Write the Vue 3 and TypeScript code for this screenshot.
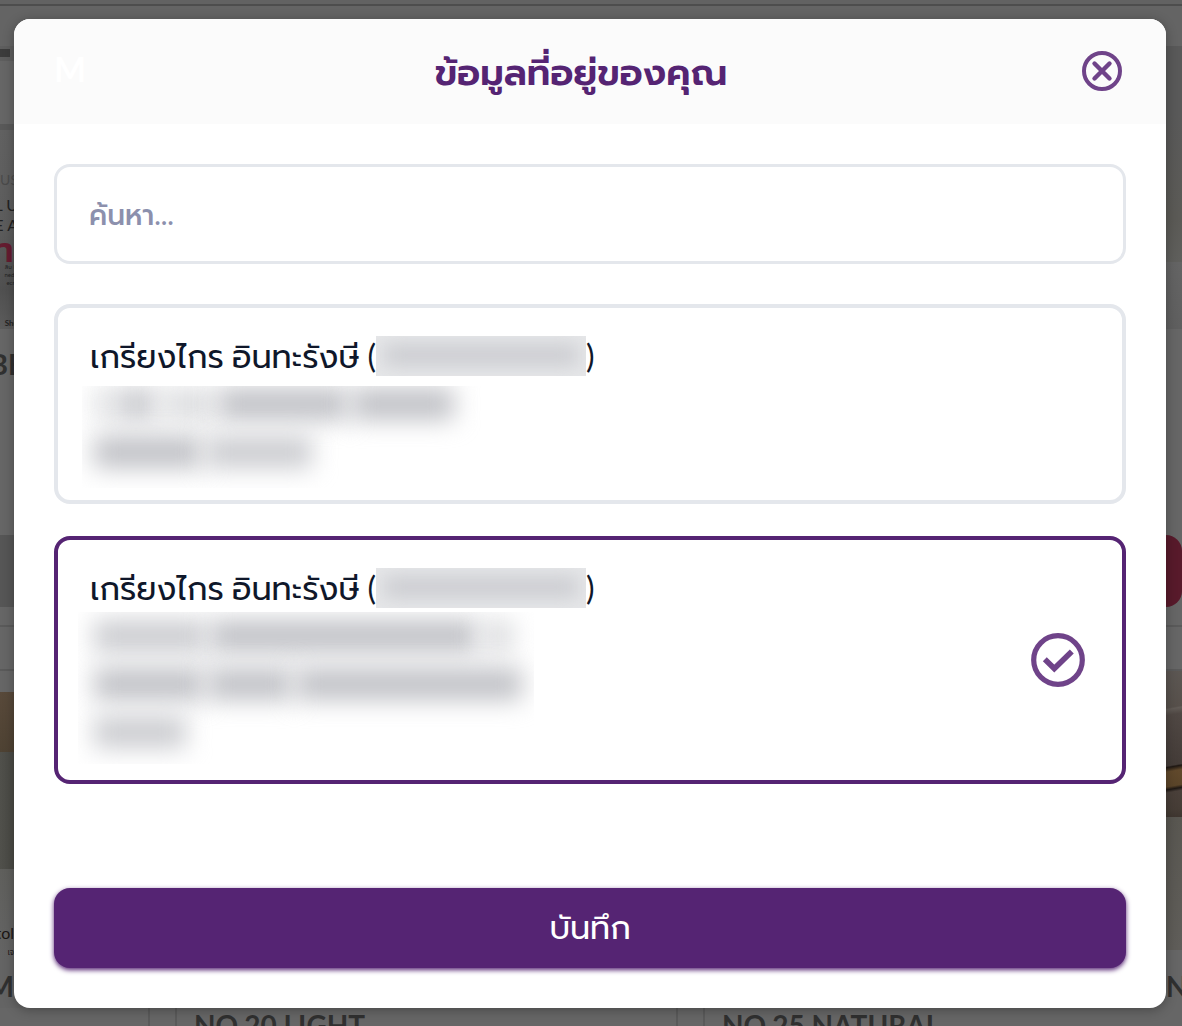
<script setup lang="ts">
import { ref } from 'vue'

interface Smudge {
  width: number
  tone: string
}

interface Address {
  id: string
  name: string
  phone: string
  box: string
  rows: Smudge[][]
}

const search = ref('')
const selected = ref('office')

const addresses: Address[] = [
  {
    id: 'home',
    name: 'เกรียงไกร อินทะรังษี',
    phone: 'first',
    box: 'short',
    rows: [
      [
        { width: 16, tone: 'pale' },
        { width: 44, tone: 'mid' },
        { width: 52, tone: 'pale' },
        { width: 130, tone: 'dark' },
        { width: 102, tone: 'dark' },
      ],
      [
        { width: 108, tone: 'dark' },
        { width: 106, tone: 'mid' },
      ],
    ],
  },
  {
    id: 'office',
    name: 'เกรียงไกร อินทะรังษี',
    phone: 'second',
    box: 'long',
    rows: [
      [
        { width: 112, tone: 'mid' },
        { width: 268, tone: 'dark' },
        { width: 32, tone: 'pale' },
      ],
      [
        { width: 110, tone: 'dark' },
        { width: 84, tone: 'dark' },
        { width: 226, tone: 'dark' },
      ],
      [{ width: 92, tone: 'mid' }],
    ],
  },
]
</script>

<template>
  <div class="screen">
    <div class="shop" aria-hidden="true">
      <div class="topbar"></div>
      <div class="aisle">
        <div class="rail left">
          <div class="strip"><span class="stub"></span></div>
          <div class="poster">
            <p class="faint">US</p>
            <p class="thin">L U</p>
            <p class="thin">E A</p>
            <p class="red">า</p>
            <p class="tiny">สิบ N<br />ned t<br />ecru</p>
            <p class="caption">Shu</p>
          </div>
          <p class="product">BE</p>
          <div class="slab"></div>
          <div class="divider"></div>
          <div class="tan"></div>
          <div class="stone"></div>
          <div class="lower">
            <p class="tol">tol</p>
            <p class="sub">เจ</p>
            <p class="product">M</p>
          </div>
        </div>
        <div class="rail right">
          <div class="banner"></div>
          <div class="banner-foot"></div>
          <div class="red-button"></div>
          <div class="divider"></div>
          <div class="jar"></div>
          <div class="shelf"></div>
          <p class="product">N</p>
        </div>
      </div>
      <div class="products">
        <div class="product-card first"></div>
        <div class="product-card"><p class="product">NO.20 LIGHT</p></div>
        <div class="product-card"><p class="product">NO.25 NATURAL</p></div>
      </div>
    </div>

    <div class="overlay">
      <section class="dialog" role="dialog" aria-modal="true" aria-labelledby="dialog-title">
        <header class="dialog-head">
          <span class="monogram">M</span>
          <h1 id="dialog-title">ข้อมูลที่อยู่ของคุณ</h1>
          <button class="close" type="button" aria-label="ปิด">
            <svg viewBox="0 0 40 40" width="40" height="40" fill="none" stroke="currentColor">
              <circle cx="20" cy="20" r="18" stroke-width="4" />
              <path d="M12.500 12.500L27.500 27.500M27.500 12.500L12.500 27.500" stroke-width="4.400" stroke-linecap="round" />
            </svg>
          </button>
        </header>

        <form class="dialog-body" @submit.prevent>
          <input v-model="search" class="search" type="text" placeholder="ค้นหา..." aria-label="ค้นหา" />

          <div class="addresses">
            <label
              v-for="address in addresses"
              :key="address.id"
              class="address"
              :class="{ active: selected === address.id }"
            >
              <input v-model="selected" class="radio" type="radio" name="address" :value="address.id" />
              <span class="details">
                <span class="name">
                  <span class="who">{{ address.name }} (</span>
                  <span class="phone" :class="address.phone"><span></span></span>
                  <span>)</span>
                </span>
                <span class="hidden-text" :class="address.box">
                  <span v-for="(row, r) in address.rows" :key="r" class="smudge-row">
                    <span
                      v-for="(s, i) in row"
                      :key="i"
                      class="smudge"
                      :class="s.tone"
                      :style="{ width: s.width + 'px' }"
                    ></span>
                  </span>
                </span>
              </span>
              <svg
                v-if="selected === address.id"
                class="check"
                viewBox="0 0 54 54"
                width="54"
                height="54"
                fill="none"
                stroke="currentColor"
              >
                <circle cx="27" cy="27" r="24.300" stroke-width="5.200" />
                <path d="M13.800 26.300L23.300 35.500L40.800 18.500" stroke-width="5.600" />
              </svg>
            </label>
          </div>

          <button class="save" type="submit">บันทึก</button>
        </form>
      </section>
    </div>
  </div>
</template>

<style>
body {
  background: #666;
}
</style>

<style scoped>
.screen {
  position: relative;
  min-height: 100vh;
  overflow: hidden;
  font-family: Lato, 'Prompt', 'Noto Sans Thai', 'Noto Sans', sans-serif;
  color: #0f172a;
}

.screen *,
.screen {
  box-sizing: border-box;
}

p,
h1 {
  margin: 0;
}

.shop {
  position: absolute;
  inset: 0;
  overflow: hidden;
  display: flex;
  flex-direction: column;
  background: #666;
}

.topbar {
  flex: none;
  height: 46px;
  background: linear-gradient(#626262 4px, #4d4d4d 4px, #4d4d4d 6px, #646464 6px);
}

.aisle {
  flex: none;
  height: 962px;
  display: flex;
  justify-content: space-between;
}

.rail {
  display: flex;
  flex-direction: column;
}

.left {
  width: 24px;
}

.right {
  width: 16px;
}

.strip {
  height: 15px;
  padding-top: 3px;
  background: #5e5e5e;
}

.stub {
  display: block;
  width: 10px;
  height: 8px;
  background: #3c3c3c;
}

.poster {
  height: 205px;
  margin-top: 63px;
  padding: 38px 6px 0 0;
  border-top: 6px solid #595959;
  background: linear-gradient(#616161, #5c5c5c 50%, #505050 80%, #5c5c5c);
  direction: rtl;
  white-space: nowrap;
  font-family: Lato, 'Noto Sans Thai', sans-serif;
  color: #222;
}

.faint {
  height: 27px;
  font-size: 14px;
  line-height: 24px;
  color: #4b4b4b;
}

.thin {
  font-size: 16px;
  line-height: 20px;
}

.red {
  padding-right: 4px;
  font-size: 34px;
  font-weight: 700;
  line-height: 28px;
  color: #651c30;
}

.tiny {
  font-size: 6px;
  line-height: 8px;
}

.caption {
  margin-top: 28px;
  font-size: 8px;
  font-weight: 700;
  line-height: 16px;
}

.product {
  direction: rtl;
  font-family: Lato, sans-serif;
  font-size: 28px;
  font-weight: 700;
  line-height: 34px;
  color: #303030;
  white-space: nowrap;
}

.left > .product {
  margin-top: 18px;
}

.slab {
  height: 72px;
  margin-top: 154px;
  background: #565656;
}

.divider {
  height: 46px;
  margin-top: 18px;
  border-top: 2px solid #5a5a5a;
  border-bottom: 2px solid #5a5a5a;
}

.tan {
  height: 60px;
  margin-top: 21px;
  background: linear-gradient(#58493a, #4e4233);
}

.stone {
  height: 117px;
  background: linear-gradient(to right, #50504b, #454540);
}

.lower {
  height: 139px;
  padding: 50px 10px 0 0;
  background: linear-gradient(#5f5f5c, #646464 90px);
  direction: rtl;
  font-family: Lato, 'Noto Sans Thai', sans-serif;
}

.tol {
  font-size: 16px;
  line-height: 28px;
  color: #1c1614;
}

.sub {
  height: 22px;
  font-size: 8px;
  line-height: 10px;
  color: #1c1614;
}

.banner {
  height: 216px;
  background: linear-gradient(#595959 30%, #5b5a56 80%, #5f5f5c);
}

.banner-foot {
  height: 67px;
  background: linear-gradient(#646464, #5f5f5f);
}

.red-button {
  height: 72px;
  margin-top: 206px;
  border-radius: 0 16px 16px 0;
  background: #581a2b;
}

.jar {
  height: 146px;
  background: linear-gradient(
    170deg,
    #5c5753 0,
    #57504b 25%,
    #625c57 26%,
    #504844 30%,
    #443c38 64%,
    #1f1813 65%,
    #61492c 68%,
    #5b4529 78%,
    #1e1814 80%,
    #4a403a 82%,
    #463d36 94%,
    #3e352f
  );
}

.shelf {
  height: 133px;
  background: linear-gradient(#595751, #5f5d59);
}

.right > .product {
  margin-top: 19px;
  direction: ltr;
}

.products {
  flex: none;
  display: grid;
  grid-template-columns: 150px 1fr 1fr;
  column-gap: 25px;
  margin-right: -24px;
}

.product-card {
  height: 80px;
  padding-left: 17px;
  border: solid #5a5a5a;
  border-width: 0 2px;
}

.product-card.first {
  border-left: 0;
}

.product-card .product {
  direction: ltr;
}

.overlay {
  position: relative;
  min-height: 100vh;
  padding: 19px 16px 18px 14px;
}

.dialog {
  overflow: hidden;
  border-radius: 16px;
  background: #fff;
  box-shadow: 0 2px 12px rgba(0, 0, 0, 0.3);
}

.dialog-head {
  display: grid;
  grid-template-columns: 46px 1fr 60px;
  align-items: center;
  height: 105px;
  padding: 0 44px 2px 40px;
  background: #fbfbfb;
}

.monogram {
  padding-bottom: 4px;
  font-family: Lato, sans-serif;
  font-size: 34px;
  font-weight: 700;
  line-height: 40px;
  color: #fff;
}

h1 {
  text-align: center;
  font-size: 37px;
  font-weight: 600;
  line-height: 60px;
  color: #552473;
}

.close {
  justify-self: end;
  width: 40px;
  height: 40px;
  padding: 0;
  border: 0;
  background: none;
  color: #6f4389;
}

.close svg {
  display: block;
}

.dialog-body {
  padding: 40px;
}

.search {
  display: block;
  width: 100%;
  height: 100px;
  padding: 0 32px;
  border: 3px solid #e4e7ec;
  border-radius: 16px;
  outline: 0;
  background: #fff;
  font: inherit;
  font-size: 28px;
  font-weight: 500;
}

.search::placeholder {
  color: #8c90ad;
  opacity: 1;
}

.addresses {
  display: flex;
  flex-direction: column;
  gap: 32px;
  margin: 40px 0 104px;
}

.address {
  display: flex;
  align-items: center;
  justify-content: space-between;
  padding: 24px 37px 24px 32px;
  border: 4px solid #e4e7ec;
  border-radius: 16px;
}

.address.active {
  border-color: #552473;
}

.radio {
  position: absolute;
  opacity: 0;
}

.details {
  display: block;
}

.name {
  display: flex;
  align-items: center;
  height: 48px;
  font-size: 32px;
  line-height: 48px;
  white-space: nowrap;
}

.phone {
  overflow: hidden;
  width: 210px;
  height: 40px;
  background: #e6e7e9;
}

.phone span {
  display: block;
  height: 18px;
  margin: 10px 8px;
  background: #c6c7cc;
  filter: blur(10px);
}

.hidden-text {
  display: block;
  width: 456px;
  margin-left: -12px;
}

.short {
  height: 96px;
  clip-path: inset(6px 0 -12px 4px);
}

.long {
  height: 144px;
  clip-path: inset(0 0 -8px 0);
}

.smudge-row {
  display: flex;
  align-items: center;
  gap: 4px;
  height: 48px;
  padding-left: 16px;
}

.smudge {
  height: 32px;
  filter: blur(12px);
}

.dark {
  background: #c0c1c6;
}

.mid {
  background: #cbccd0;
}

.pale {
  background: #dddee0;
}

.check {
  flex: none;
  color: #6f4389;
}

.save {
  display: block;
  width: 100%;
  height: 80px;
  padding: 0;
  border: 0;
  border-radius: 16px;
  background: #552473;
  box-shadow: 0 2px 5px #552473;
  color: #fff;
  font: inherit;
  font-size: 32px;
}
</style>
